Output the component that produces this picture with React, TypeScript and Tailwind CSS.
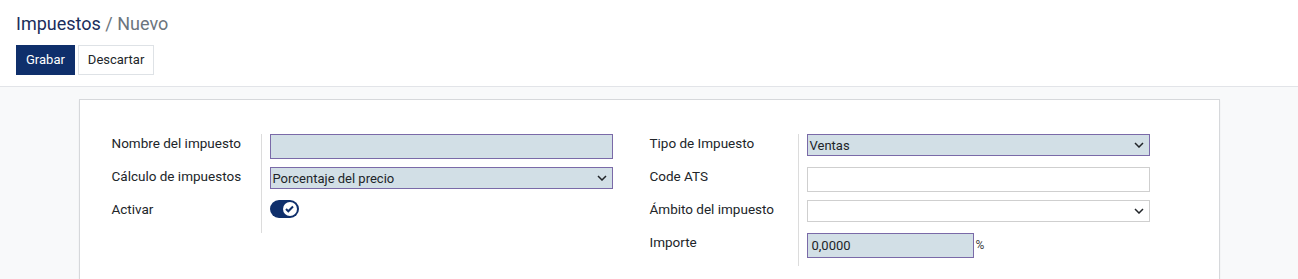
import React from "react";

function Chevron() {
  return (
    <svg width="10" height="6" viewBox="0 0 10 6" className="shrink-0">
      <path d="M1 1l4 4 4-4" fill="none" stroke="#212529" strokeWidth="1.5" />
    </svg>
  );
}

function Label({ children }: { children: React.ReactNode }) {
  return (
    <div className="h-[33px] whitespace-nowrap pr-2 text-[13.5px] leading-[18px] text-[#212529]">{children}</div>
  );
}

export default function App() {
  return (
    <div className="min-h-[279px] bg-[#f8f9fa] font-['Roboto',sans-serif] text-[13px] text-[#212529]">
      <div className="h-[87px] border-b border-[#e2e4e8] bg-white px-4 pt-[13px]">
        <div className="text-[18px] leading-[22px]">
          <span className="text-[#1b2d5c]">Impuestos</span>
          <span className="text-[#6c757d]"> / Nuevo</span>
        </div>
        <div className="mt-[10px] flex gap-[3px]">
          <button className="h-[30px] bg-[#0f2f6b] px-[10px] text-[13px] text-white">Grabar</button>
          <button className="h-[30px] border border-[#dee2e6] bg-white px-[9px] text-[13px] text-[#212529]">
            Descartar
          </button>
        </div>
      </div>

      <div className="mx-auto mt-[12px] w-[1141px] border border-[#d6d8db] bg-white px-[32px] pt-[34px] pb-4 shadow-[0_1px_2px_rgba(0,0,0,0.05)]">
        <div className="flex items-start">
          {/* left group */}
          <div className="flex w-[538px]">
            <div className="w-[149px]">
              <Label>Nombre del impuesto</Label>
              <Label>Cálculo de impuestos</Label>
              <Label>Activar</Label>
            </div>
            <div className="border-l border-[#dcdcdc] pl-2">
              <div className="h-[33px]">
                <div className="h-[25px] w-[343px] border border-[#7a6aa8] bg-[#d2dfe6]" />
              </div>
              <div className="h-[33px]">
                <div className="flex h-[22px] w-[343px] items-center justify-between border border-[#7a6aa8] bg-[#d2dfe6] pl-[2px] pr-[5px]">
                  <span className="leading-none">Porcentaje del precio</span>
                  <Chevron />
                </div>
              </div>
              <div className="h-[33px]">
                <div className="flex h-[18px] w-[29px] items-center justify-end rounded-full bg-[#0f2f6b] pr-[2px]">
                  <div className="flex h-[14px] w-[14px] items-center justify-center rounded-full bg-white">
                    <svg width="9" height="8" viewBox="0 0 9 8">
                      <path d="M1 4l2.3 2.3L8 1.5" fill="none" stroke="#0f2f6b" strokeWidth="2" />
                    </svg>
                  </div>
                </div>
              </div>
            </div>
          </div>

          {/* right group */}
          <div className="flex">
            <div className="w-[148px]">
              <Label>Tipo de Impuesto</Label>
              <Label>Code ATS</Label>
              <Label>Ámbito del impuesto</Label>
              <Label>Importe</Label>
            </div>
            <div className="border-l border-[#dcdcdc] pl-2">
              <div className="h-[33px]">
                <div className="flex h-[22px] w-[343px] items-center justify-between border border-[#7a6aa8] bg-[#d2dfe6] pl-[2px] pr-[5px]">
                  <span className="leading-none">Ventas</span>
                  <Chevron />
                </div>
              </div>
              <div className="h-[33px]">
                <div className="h-[25px] w-[343px] border border-[#cfcfcf] bg-white" />
              </div>
              <div className="h-[33px]">
                <div className="flex h-[22px] w-[343px] items-center justify-end border border-[#cfcfcf] bg-white pr-[5px]">
                  <Chevron />
                </div>
              </div>
              <div className="flex h-[33px] items-start">
                <div className="flex h-[25px] w-[167px] items-center border border-[#7a6aa8] bg-[#d2dfe6] pl-[4px]">
                  0,0000
                </div>
                <span className="ml-[2px] mt-[3px] text-[12px] text-[#444]">%</span>
              </div>
            </div>
          </div>
        </div>
      </div>
    </div>
  );
}
